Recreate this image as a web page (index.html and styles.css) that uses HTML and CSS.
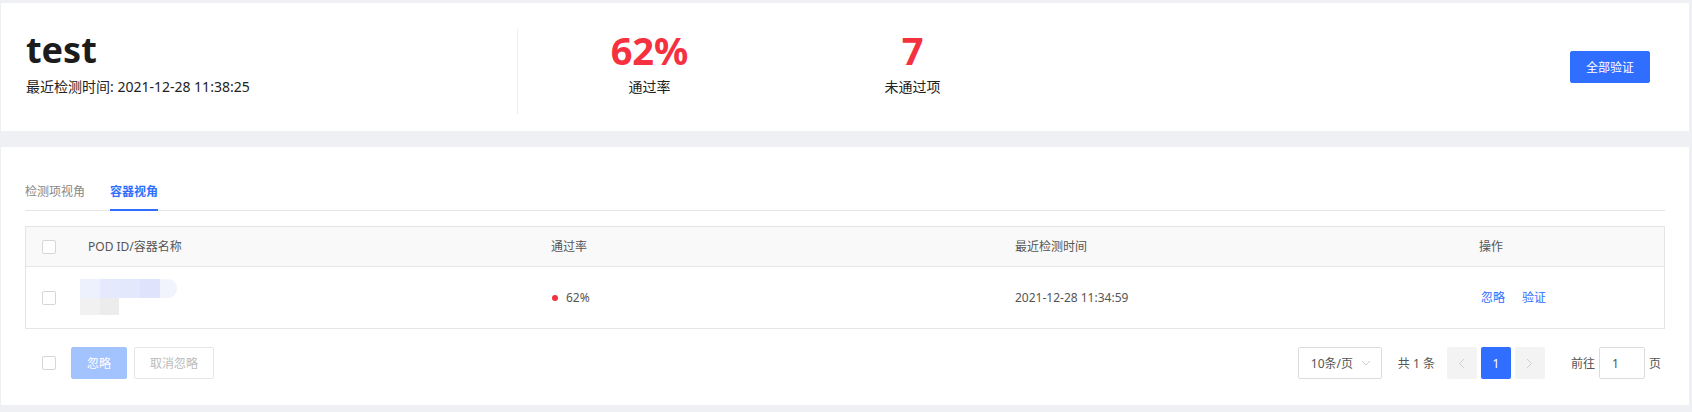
FILE: index.html
```html
<!DOCTYPE html>
<html lang="zh-CN">
<head>
<meta charset="utf-8">
<title>test</title>
<link rel="stylesheet" href="styles.css">
</head>
<body>
<div class="page">
  <section class="card summary">
    <div class="info">
      <h1 class="title">test</h1>
      <div class="sub">最近检测时间: 2021-12-28 11:38:25</div>
    </div>
    <div class="divider"></div>
    <div class="stat">
      <div class="num">62%</div>
      <div class="label">通过率</div>
    </div>
    <div class="stat">
      <div class="num">7</div>
      <div class="label">未通过项</div>
    </div>
    <div class="spacer"></div>
    <button class="btn btn-primary btn-verify">全部验证</button>
  </section>

  <section class="card detail">
    <div class="tabs">
      <div class="tab">检测项视角</div>
      <div class="tab active">容器视角</div>
    </div>

    <div class="table">
      <div class="tr thead">
        <div class="td col-check"><span class="checkbox"></span></div>
        <div class="td">POD ID/容器名称</div>
        <div class="td">通过率</div>
        <div class="td">最近检测时间</div>
        <div class="td">操作</div>
      </div>
      <div class="tr tbody">
        <div class="td col-check"><span class="checkbox"></span></div>
        <div class="td">
          <div class="masked">
            <div class="mask-line">
              <span class="m m1"></span><span class="m m2"></span><span class="m m3"></span><span class="m m4"></span><span class="m m5"></span>
            </div>
            <div class="mask-line">
              <span class="m g1"></span><span class="m g2"></span>
            </div>
          </div>
        </div>
        <div class="td"><span class="dot"></span>62%</div>
        <div class="td">2021-12-28 11:34:59</div>
        <div class="td ops"><a class="link">忽略</a><a class="link">验证</a></div>
      </div>
    </div>

    <div class="footer">
      <div class="bulk">
        <span class="checkbox"></span>
        <button class="btn btn-primary disabled btn-ignore">忽略</button>
        <button class="btn btn-default disabled btn-cancel">取消忽略</button>
      </div>
      <div class="pager">
        <div class="select">
          <span>10条/页</span>
          <svg class="caret" width="10" height="6" viewBox="0 0 10 6"><path d="M1 1 L5 5 L9 1" fill="none" stroke="#cfcfcf" stroke-width="1"/></svg>
        </div>
        <span class="total">共 1 条</span>
        <div class="pages">
          <span class="pg disabled"><svg width="7" height="11" viewBox="0 0 7 11"><path d="M6 1 L1.5 5.5 L6 10" fill="none" stroke="#cfcfcf" stroke-width="1"/></svg></span>
          <span class="pg current">1</span>
          <span class="pg disabled"><svg width="7" height="11" viewBox="0 0 7 11"><path d="M1 1 L5.5 5.5 L1 10" fill="none" stroke="#cfcfcf" stroke-width="1"/></svg></span>
        </div>
        <span class="goto">前往</span>
        <span class="jump">1</span>
        <span class="unit">页</span>
      </div>
    </div>
  </section>
</div>
</body>
</html>
```

FILE: styles.css
```css
* { box-sizing: border-box; }

html, body {
  margin: 0;
  padding: 0;
  background: #eff0f4;
}

body {
  font-family: "Noto Sans", "Noto Sans CJK SC", sans-serif;
  color: #222;
  font-size: 12px;
}

.page {
  padding: 3px 3px 7px 1px;
  display: flex;
  flex-direction: column;
  gap: 16px;
}

.card {
  background: #fff;
}

/* ---------- summary ---------- */
.summary {
  height: 128px;
  display: flex;
  align-items: flex-start;
  padding: 24px 39px 0 25px;
}

.info {
  width: 491px;
  margin-top: 1px;
}

.title {
  margin: 0;
  font-size: 36px;
  line-height: 44px;
  font-weight: 700;
  color: #1c1c1c;
}

.sub {
  margin-top: 4px;
  font-size: 14px;
  line-height: 22px;
  color: #222;
}

.divider {
  width: 1px;
  height: 85px;
  margin-top: 2px;
  background: #eeeeee;
}

.stat {
  width: 263px;
  text-align: center;
}

.num {
  font-size: 38px;
  line-height: 46px;
  font-weight: 700;
  color: #f5303f;
}

.label {
  margin-top: 3px;
  font-size: 14px;
  line-height: 22px;
  color: #222;
}

.spacer { flex: 1; }

.btn {
  font-family: inherit;
  font-size: 12px;
  height: 32px;
  border: 1px solid transparent;
  border-radius: 2px;
  padding: 0;
  cursor: pointer;
}

.btn-primary {
  background: #306eff;
  border-color: #306eff;
  color: #fff;
}

.btn-verify {
  width: 80px;
  align-self: center;
  margin-top: -24px;
}

/* ---------- detail ---------- */
.detail {
  height: 258px;
  padding: 30px 24px 0 24px;
}

.tabs {
  display: flex;
  gap: 25px;
  border-bottom: 1px solid #e5e5e5;
}

.tab {
  font-size: 12px;
  line-height: 20px;
  padding: 5px 0 7px;
  color: #888;
  border-bottom: 2px solid transparent;
  margin-bottom: -1px;
}

.tab.active {
  color: #306eff;
  font-weight: 700;
  border-bottom-color: #306eff;
}

.table {
  margin-top: 15px;
  border: 1px solid #e5e5e5;
}

.tr {
  display: grid;
  grid-template-columns: 52px 463px 464px 464px 1fr;
  align-items: center;
}

.thead {
  height: 40px;
  background: #f9f9f9;
  border-bottom: 1px solid #e5e5e5;
  color: #555;
}

.tbody {
  height: 61px;
  color: #555;
}

.td {
  padding-left: 10px;
  font-size: 12px;
  line-height: 20px;
  display: flex;
  align-items: center;
}

.td.col-check {
  padding-left: 16px;
}

.checkbox {
  display: inline-block;
  width: 14px;
  height: 14px;
  border: 1px solid #d6d6d6;
  border-radius: 2px;
  background: #fff;
}

.masked {
  display: flex;
  flex-direction: column;
  margin-left: -8px;
  margin-top: -2px;
  filter: blur(0.6px);
}

.mask-line {
  display: flex;
  height: 19px;
}

.mask-line + .mask-line { height: 17px; }

.m { display: block; height: 100%; }
.m1 { width: 20px; background: #edf1fe; }
.m2 { width: 20px; background: #e4e9fd; }
.m3 { width: 20px; background: #e3e8fd; }
.m4 { width: 20px; background: #dfe4fc; }
.m5 { width: 17px; background: #f1f3fd; border-radius: 0 9px 9px 0; }
.g1 { width: 20px; background: #f1f1f1; }
.g2 { width: 19px; background: #ececec; }

.dot {
  width: 6px;
  height: 6px;
  border-radius: 50%;
  background: #f5303f;
  margin: 0 8px 0 1px;
}

.ops { gap: 17px; padding-left: 12px; }

.link {
  color: #306eff;
  cursor: pointer;
}

/* ---------- footer ---------- */
.footer {
  margin-top: 18px;
  height: 32px;
  display: flex;
  justify-content: space-between;
  align-items: center;
}

.bulk {
  display: flex;
  align-items: center;
  padding-left: 17px;
}

.btn.disabled { cursor: not-allowed; }

.btn-ignore {
  width: 56px;
  margin-left: 15px;
  background: #a3c3ff;
  border-color: #a3c3ff;
  color: #fff;
}

.btn-cancel {
  width: 80px;
  margin-left: 7px;
  background: #fff;
  border-color: #e6e6e6;
  color: #bbb;
}

.pager {
  display: flex;
  align-items: center;
  padding-right: 4px;
  color: #555;
  font-size: 12px;
}

.select {
  width: 84px;
  height: 32px;
  border: 1px solid #dcdcdc;
  border-radius: 2px;
  display: flex;
  align-items: center;
  justify-content: space-between;
  padding: 0 10px 0 12px;
  color: #555;
}

.total {
  margin-left: 16px;
}

.pages {
  display: flex;
  gap: 4px;
  margin-left: 12px;
}

.pg {
  width: 30px;
  height: 32px;
  border-radius: 2px;
  display: flex;
  align-items: center;
  justify-content: center;
  background: #f3f3f3;
}

.pg.current {
  background: #306eff;
  color: #fff;
}

.goto { margin-left: 26px; }

.jump {
  width: 46px;
  height: 32px;
  margin-left: 4px;
  border: 1px solid #dcdcdc;
  border-radius: 2px;
  display: flex;
  align-items: center;
  padding-left: 12px;
}

.unit { margin-left: 4px; }
```
